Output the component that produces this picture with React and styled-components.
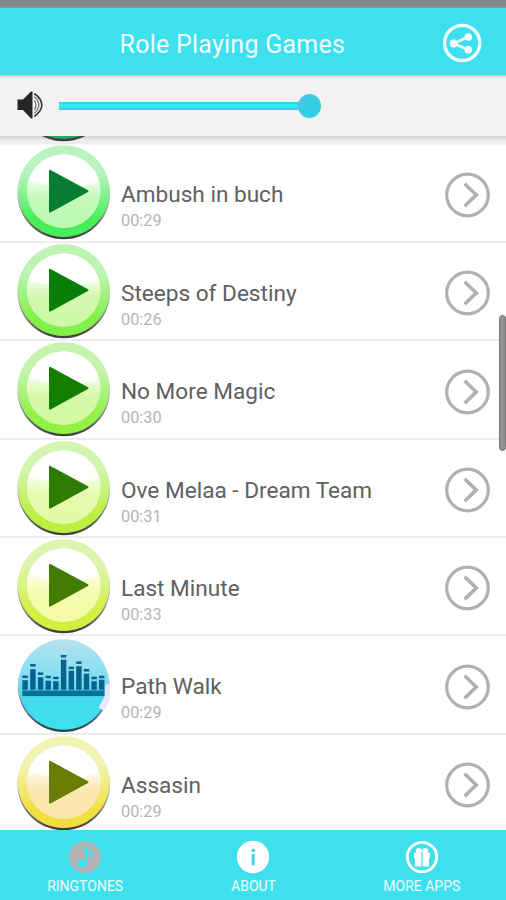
import React from 'react';
import styled, {createGlobalStyle} from 'styled-components';

const GlobalStyle = createGlobalStyle`
  * {
    box-sizing: border-box;
  }
  body {
    margin: 0;
    background: #fff;
    font-family: Roboto, sans-serif;
  }
  svg {
    display: block;
    flex-shrink: 0;
  }
`;
const Screen = styled.div`
  position: relative;
  width: 506px;
  height: 900px;
  display: flex;
  flex-direction: column;
  overflow: hidden;
`;
const StatusBar = styled.div`
  height: 8px;
  flex-shrink: 0;
  background: linear-gradient(#868588 6px, #7aa2a8);
`;
const Header = styled.header`
  height: 67px;
  flex-shrink: 0;
  display: flex;
  align-items: center;
  padding: 2px 24px 0 119.5px;
  background: #3fe0ee;
`;
const Title = styled.h1`
  flex: 1;
  margin: 0;
  padding-top: 4px;
  font-size: 25px;
  line-height: 30px;
  font-weight: 400;
  letter-spacing: 0.25px;
  white-space: nowrap;
  color: #effeff;
`;
const Volume = styled.div`
  height: 61px;
  flex-shrink: 0;
  display: flex;
  align-items: center;
  padding: 0 0 1px 17px;
  background: linear-gradient(#b9c9c9, #e6e6e6 2px, #f2f2f2 4px);
`;
const Slider = styled.div`
  display: flex;
  align-items: center;
  margin-left: 16px;
  padding-top: 1px;
`;
const Track = styled.div`
  width: 240px;
  height: 8px;
  background: linear-gradient(#2fcfe2, #3be4f2 3px, #3be4f2 5px, #2fcfe2);
`;
const Thumb = styled.div`
  width: 23px;
  height: 24px;
  margin-left: -1px;
  border-radius: 50%;
  background: linear-gradient(135deg, #4cc6e4, #27d3e8);
`;
const List = styled.main`
  flex: 1;
  min-height: 0;
  overflow: hidden;
  background: linear-gradient(#d6d6d6, #dadada 2px, #ececec 4px, #efefef 8px, #fff 9px);
`;
const Row = styled.div`
  height: 98.45px;
  display: flex;
  align-items: flex-start;
  padding: 1px 16px 0 16px;
  border-bottom: 2px solid ${props => (props.$hidden ? 'transparent' : '#ededed')};
  margin-top: ${props => (props.$hidden ? '-90.2px' : '0')};
`;
const Song = styled.div`
  flex: 1;
  padding: 36px 0 0 9px;
`;
const Name = styled.div`
  font-size: 22.6px;
  line-height: 27px;
  white-space: nowrap;
  color: #606060;
`;
const Time = styled.div`
  margin-top: 3px;
  font-size: 16.3px;
  line-height: 20px;
  color: #b5b5b5;
`;
const Arrow = styled.div`
  padding-top: 26.4px;
`;
const Nav = styled.nav`
  height: 70px;
  flex-shrink: 0;
  display: grid;
  grid-template-columns: repeat(3, 1fr);
  padding-left: 1px;
  background: #3fe0ee;
`;
const Tab = styled.div`
  display: flex;
  flex-direction: column;
  align-items: center;
  padding-top: 10px;
`;
const TabLabel = styled.span`
  margin-top: 4px;
  font-size: 14px;
  line-height: 16px;
  color: #effeff;
`;
const ScrollThumb = styled.div`
  position: absolute;
  top: 315px;
  right: 0;
  width: 7px;
  height: 136px;
  border: 1px solid #757575;
  border-radius: 4px;
  background: #929292;
`;

const songs = [
  {name: 'Ambush in buch', time: '00:29', top: '#baf3bf', ring: '#48ee5a', glow: '#b5f7a8', play: '#067d33'},
  {name: 'Steeps of Destiny', time: '00:26', top: '#bff3b6', ring: '#82f04b', glow: '#c6f79a', play: '#087f09'},
  {name: 'No More Magic', time: '00:30', top: '#c4f3ae', ring: '#91f145', glow: '#ccf894', play: '#137e02'},
  {name: 'Ove Melaa - Dream Team', time: '00:31', top: '#d2f5b0', ring: '#bbf043', glow: '#dffa9b', play: '#2e7d02'},
  {name: 'Last Minute', time: '00:33', top: '#def3ae', ring: '#d2f040', glow: '#f3fa9b', play: '#427c02'},
  {name: 'Path Walk', time: '00:29', playing: true},
  {name: 'Assasin', time: '00:29', top: '#eff4b5', ring: '#f0df42', glow: '#fbe2a0', play: '#6b7c04'},
];

// x, top of the bar, top of its peak marker
const bars = [
  [6.4, 42, 37.3], [14.2, 31, 25.8], [21.9, 39, 34.2], [29.5, 42.5, 37.5], [37.2, 43, 38.5], [44.9, 21.5, 16.8],
  [52.6, 32.5, 28.5], [60.2, 28, 23.2], [67.8, 35.5, 30.8], [75.4, 43, 38.5], [83, 41.5, 37.5],
];

const PlayButton = ({id, top, ring, glow, play}) => (
  <svg width="96" height="96" viewBox="0 0.7 96 96">
    <defs>
      <linearGradient id={`ring${id}`} x1="0" y1="0" x2="0" y2="1">
        <stop offset="0" stopColor={top} />
        <stop offset="0.3" stopColor={top} />
        <stop offset="0.8" stopColor={ring} />
      </linearGradient>
      <linearGradient id={`face${id}`} x1="0" y1="0" x2="0" y2="1">
        <stop offset="0.3" stopColor="#fff" />
        <stop offset="0.6" stopColor={glow} stopOpacity="0.8" />
        <stop offset="1" stopColor={glow} stopOpacity="0.9" />
      </linearGradient>
      <linearGradient id={`edge${id}`} x1="0" y1="0" x2="0" y2="1">
        <stop offset="0.3" stopColor="#444" stopOpacity="0" />
        <stop offset="0.7" stopColor="#444" stopOpacity="0.6" />
        <stop offset="1" stopColor="#3a3a3a" />
      </linearGradient>
      <clipPath id={`clip${id}`}>
        <circle cx="47.7" cy="46.8" r="36.7" />
      </clipPath>
    </defs>
    <circle cx="47.7" cy="48.6" r="46.4" fill={`url(#edge${id})`} />
    <circle cx="47.7" cy="46.8" r="45.9" fill={`url(#ring${id})`} />
    <circle cx="47.7" cy="46.8" r="36.7" fill="#fff" />
    <circle cx="47.7" cy="46.8" r="36.7" fill={`url(#face${id})`} />
    <path d="M10 35 C24 42 66 48 86 35 V0 H10Z" fill="#fff" opacity="0.85" clipPath={`url(#clip${id})`} />
    <path d="M34 26.5 L71.5 46.8 L34 67.2Z" fill={play} stroke={play} strokeWidth="2" strokeLinejoin="round" />
  </svg>
);

const Equalizer = () => (
  <svg width="96" height="96" viewBox="0 -1.2 96 96">
    <defs>
      <linearGradient id="sky" x1="0" y1="0" x2="0" y2="1">
        <stop offset="0" stopColor="#b4e2f2" />
        <stop offset="0.4" stopColor="#86def0" />
        <stop offset="0.65" stopColor="#45daee" />
        <stop offset="1" stopColor="#3ee0f0" />
      </linearGradient>
      <linearGradient id="rim" x1="0" y1="0" x2="0" y2="1">
        <stop offset="0.3" stopColor="#444" stopOpacity="0" />
        <stop offset="0.7" stopColor="#345" stopOpacity="0.7" />
        <stop offset="1" stopColor="#244" />
      </linearGradient>
    </defs>
    <circle cx="47.7" cy="47.7" r="46" fill="url(#rim)" />
    <circle cx="47.7" cy="46.3" r="45.3" fill="url(#sky)" />
    <path d="M89.5 46 H94 V60 Q91.5 68 87.5 72.5 L82.5 69 Q86 64 87.5 60 L89 57Z" fill="#e9e6fb" />
    {bars.map(([x, y, cap]) => (
      <g key={x} fill="#08618f">
        <rect x={x} y={y} width="5.4" height={51.6 - y} />
        <rect x={x} y={cap} width="5.4" height="2.5" />
      </g>
    ))}
    <rect x="6.4" y="52.3" width="82" height="5.6" fill="#056e99" />
  </svg>
);

const ShareIcon = () => (
  <svg width="40" height="40" viewBox="0 0 40 40" fill="none" stroke="#f4feff">
    <circle cx="20.2" cy="20" r="17.6" strokeWidth="3.4" />
    <path d="M26 14 L12 20.4 L26 26.8" strokeWidth="2.6" />
    <g fill="#f4feff" stroke="none">
      <circle cx="26.3" cy="14" r="3.8" />
      <circle cx="11.8" cy="20.4" r="4" />
      <circle cx="26.3" cy="26.8" r="3.8" />
    </g>
  </svg>
);

const SpeakerIcon = () => (
  <svg width="26" height="30" viewBox="0 0 26 30">
    <path d="M0.5 9.5 H6 L14 1.5 H15.5 V28.5 H14 L6 20 H0.5Z" fill="#252525" />
    <path d="M17.3 3.5 Q24.8 9 24.8 15 T17.3 26.5" fill="none" stroke="#333" strokeWidth="1.6" />
    <path d="M17.3 6.8 Q21.8 10.5 21.8 15 T17.3 23.3" fill="none" stroke="#777" strokeWidth="1.3" />
    <path d="M17.3 10.5 Q19 12.5 19 15 T17.3 19.8" fill="none" stroke="#777" strokeWidth="1.3" />
  </svg>
);

const ArrowIcon = () => (
  <svg width="46" height="46" viewBox="0 0 46 46" fill="none" stroke="#b0b0b0">
    <circle cx="23.5" cy="23" r="20.8" strokeWidth="3.2" />
    <path d="M20.6 11.8 L32.3 22.9 L20.6 34.2" strokeWidth="3.6" />
  </svg>
);

const NoteIcon = () => (
  <svg width="34" height="34" viewBox="0 0 34 34">
    <circle cx="17" cy="17" r="16" fill="#b1b3b5" />
    <ellipse cx="14.3" cy="23.7" rx="4.9" ry="3.7" fill="#3fe0ee" />
    <path d="M16.8 24 V6 H19 Q19.5 9 22.5 11.5 Q26 14.5 24.5 18.8 Q23 14.8 19.2 13.5 V24Z" fill="#3fe0ee" />
  </svg>
);

const InfoIcon = () => (
  <svg width="34" height="34" viewBox="0 0 34 34">
    <circle cx="17" cy="17" r="16.2" fill="#fff" />
    <circle cx="17.2" cy="10.3" r="1.9" fill="#3fd6e8" />
    <rect x="15.7" y="14" width="3" height="11.3" fill="#3fd6e8" />
  </svg>
);

const GiftIcon = () => (
  <svg width="34" height="34" viewBox="0 0 34 34">
    <circle cx="17" cy="17" r="14.7" fill="none" stroke="#fff" strokeWidth="2.8" />
    <g fill="#fff">
      <path d="M9 12.8 H16.4 V18 H9Z M17.6 12.8 H25 V18 H17.6Z M10 17 H16.4 V26.5 H10Z M17.6 17 H24 V26.5 H17.6Z" />
      <circle cx="13.8" cy="10.9" r="3" />
      <circle cx="20.2" cy="10.9" r="3" />
    </g>
  </svg>
);

const App = () => (
  <>
    <GlobalStyle />
    <Screen>
      <StatusBar />
      <Header>
        <Title>Role Playing Games</Title>
        <ShareIcon />
      </Header>
      <Volume>
        <SpeakerIcon />
        <Slider>
          <Track />
          <Thumb />
        </Slider>
      </Volume>
      <List>
        <Row $hidden>
          <PlayButton id="prev" top="#baf3c9" ring="#2ba768" glow="#a8f7c0" play="#067d53" />
        </Row>
        {songs.map((song, i) => (
          <Row key={song.name}>
            {song.playing ? <Equalizer /> : <PlayButton id={i} {...song} />}
            <Song>
              <Name>{song.name}</Name>
              <Time>{song.time}</Time>
            </Song>
            <Arrow>
              <ArrowIcon />
            </Arrow>
          </Row>
        ))}
      </List>
      <Nav>
        <Tab>
          <NoteIcon />
          <TabLabel>RINGTONES</TabLabel>
        </Tab>
        <Tab>
          <InfoIcon />
          <TabLabel>ABOUT</TabLabel>
        </Tab>
        <Tab>
          <GiftIcon />
          <TabLabel>MORE APPS</TabLabel>
        </Tab>
      </Nav>
      <ScrollThumb />
    </Screen>
  </>
);

export default App;
